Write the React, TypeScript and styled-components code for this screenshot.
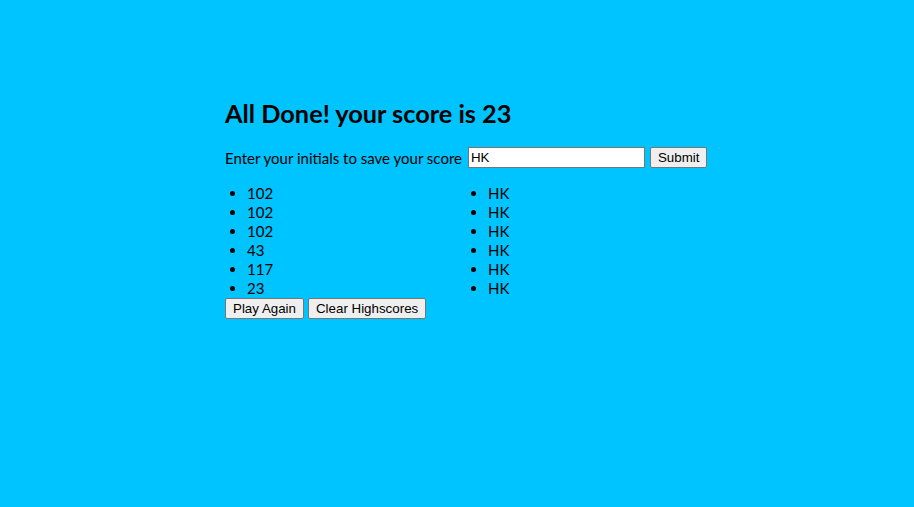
import React from 'react'
import styled, { createGlobalStyle } from 'styled-components'

const GlobalStyle = createGlobalStyle`
  html, body {
    margin: 0;
    padding: 0;
    background-color: #00c4ff;
    height: 100%;
  }
  body {
    font-family: "Lato", "Liberation Sans", sans-serif;
    color: #000;
  }
`;

// layout
const Page = styled.div`
  width: 914px;
  height: 507px;
  background-color: #00c4ff;
  display: flex;
  justify-content: flex-start;
`;

const Card = styled.main`
  margin-left: 225px;
  padding-top: 97px;
  width: 500px;
`;

const Title = styled.h1`
  margin: 0 0 18px 0;
  font-size: 25.3px;
  font-weight: 700;
  line-height: 32px;
`;

const Form = styled.form`
  display: flex;
  align-items: center;
  font-size: 15px;
  margin-bottom: 16px;
`;

const Label = styled.label`
  margin-right: 6px;
`;

const Input = styled.input`
  width: 177px;
  height: 21px;
  box-sizing: border-box;
  border: 1px solid #767676;
  padding: 1px 2px;
  font-family: "Liberation Sans", Arial, sans-serif;
  font-size: 13.33px;
  margin: 0 5px 0 0;
`;

const Btn = styled.button`
  font-family: "Liberation Sans", Arial, sans-serif;
  font-size: 13.33px;
  height: 21px;
  padding: 1px 7px;
  border: 1px solid #767676;
  border-radius: 2px;
  background-color: #efefef;
  color: #000;
  margin-right: 4px;
`;

const Columns = styled.div`
  display: flex;
`;

const ScoreList = styled.ul`
  list-style: disc;
  margin: 0;
  padding-left: 22px;
  width: 219px;
  font-size: 15px;
  line-height: 19px;
`;

const Item = styled.li``;

const BtnRow = styled.div`
  display: flex;
`;

const scores = [
  { score: 102, name: 'HK' },
  { score: 102, name: 'HK' },
  { score: 102, name: 'HK' },
  { score: 43, name: 'HK' },
  { score: 117, name: 'HK' },
  { score: 23, name: 'HK' },
];

function App() {
  return (
    <Page>
      <GlobalStyle />
      <Card>
        <Title>All Done! your score is 23</Title>
        <Form onSubmit={e => e.preventDefault()}>
          <Label>Enter your initials to save your score</Label>
          <Input defaultValue="HK" />
          <Btn type="submit">Submit</Btn>
        </Form>
        <Columns>
          <ScoreList>
            {scores.map((s, i) => <Item key={i}>{s.score}</Item>)}
          </ScoreList>
          <ScoreList>
            {scores.map((s, i) => <Item key={i}>{s.name}</Item>)}
          </ScoreList>
        </Columns>
        <BtnRow>
          <Btn>Play Again</Btn>
          <Btn>Clear Highscores</Btn>
        </BtnRow>
      </Card>
    </Page>
  )
}

export default App
